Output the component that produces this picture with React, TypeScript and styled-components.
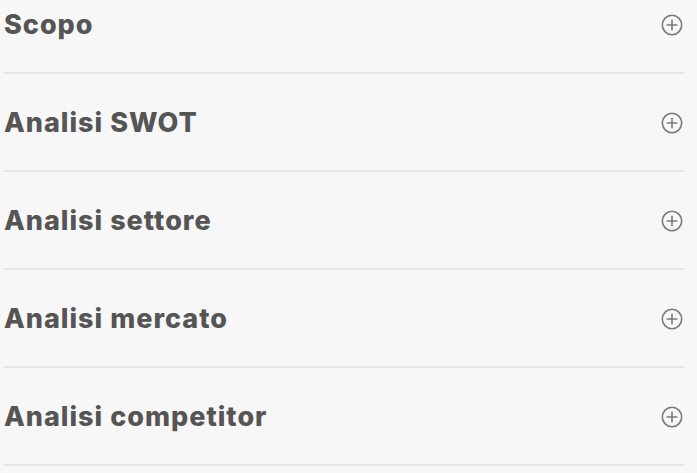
import React from "react";
import styled, { createGlobalStyle } from "styled-components";

const Global = createGlobalStyle`
  html, body { margin: 0; padding: 0; background: #f7f7f7; }
  body { font-family: Inter, "Liberation Sans", sans-serif; }
`;

const List = styled.div`
  width: 680px;
  margin-left: 4px;
  display: flex;
  flex-direction: column;
`;

const Item = styled.div`
  border-bottom: 2px solid #e4e4e4;
  margin-bottom: 24px;
`;

const Header = styled.div`
  box-sizing: border-box;
  height: 72px;
  padding-top: 5px;
  display: flex;
  justify-content: space-between;
  align-items: flex-start;
`;

const Title = styled.h3`
  margin: 0;
  font-family: Inter, "Liberation Sans", sans-serif;
  font-weight: 800;
  font-size: 27px;
  line-height: 40px;
  color: #555555;
  letter-spacing: 1px;
`;

const IconWrap = styled.span`
  display: flex;
  width: 22px;
  height: 22px;
  margin-top: 9px;
  margin-right: 1px;
`;

const PlusIcon = () => (
  <svg width="22" height="22" viewBox="0 0 22 22" fill="none" stroke="#7a7a7a" strokeWidth="1.6" strokeLinecap="round">
    <circle cx="11" cy="11" r="9.7" />
    <line x1="11" y1="6.3" x2="11" y2="15.7" />
    <line x1="6.3" y1="11" x2="15.7" y2="11" />
  </svg>
);

const items = ["Scopo", "Analisi SWOT", "Analisi settore", "Analisi mercato", "Analisi competitor"];

export default function App() {
  return (
    <>
      <Global />
      <List>
        {items.map((t) => (
          <Item key={t}>
            <Header>
              <Title>{t}</Title>
              <IconWrap>
                <PlusIcon />
              </IconWrap>
            </Header>
          </Item>
        ))}
      </List>
    </>
  );
}
